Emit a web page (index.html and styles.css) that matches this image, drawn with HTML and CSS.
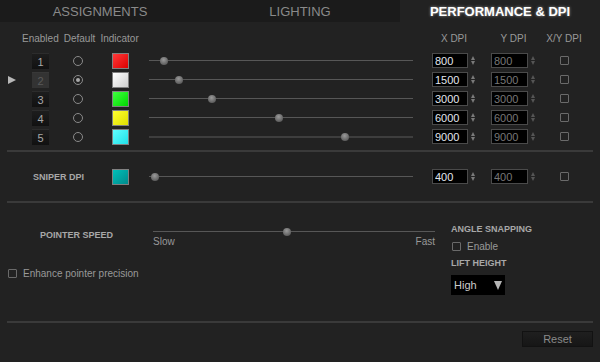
FILE: index.html
```html
<!DOCTYPE html>
<html>
<head>
    <meta charset="UTF-8">
    <meta name="viewport" content="width=device-width, initial-scale=1.0">
    <link rel="stylesheet" href="styles.css">
</head>
<body>
    <div class="tabs">
        <div class="tab">ASSIGNMENTS</div>
        <div class="tab">LIGHTING</div>
        <div class="tab active">PERFORMANCE &amp; DPI</div>
    </div>

    <div class="stages">
        <div class="stage-head">
            <div class="head-left">
                <span>Enabled</span>
                <span>Default</span>
                <span>Indicator</span>
            </div>
            <div class="col-x head">X DPI</div>
            <div class="col-y head">Y DPI</div>
            <div class="col-xy">X/Y DPI</div>
        </div>

        <div class="stage">
            <div class="pointer"></div>
            <div class="num">1</div>
            <span class="radio"></span>
            <span class="swatch red"></span>
            <div class="slider"><span class="thumb" style="left: 5.6%"></span></div>
            <div class="col-x"><input class="dpi" type="text" value="800"><span class="spin"></span></div>
            <div class="col-y"><input class="dpi off" type="text" value="800"><span class="spin dim"></span></div>
            <div class="col-xy"><span class="check"></span></div>
        </div>
        <div class="stage">
            <div class="pointer"><i class="arrow"></i></div>
            <div class="num sel">2</div>
            <span class="radio on"></span>
            <span class="swatch white"></span>
            <div class="slider"><span class="thumb" style="left: 11.5%"></span></div>
            <div class="col-x"><input class="dpi" type="text" value="1500"><span class="spin"></span></div>
            <div class="col-y"><input class="dpi off" type="text" value="1500"><span class="spin dim"></span></div>
            <div class="col-xy"><span class="check"></span></div>
        </div>
        <div class="stage">
            <div class="pointer"></div>
            <div class="num">3</div>
            <span class="radio"></span>
            <span class="swatch green"></span>
            <div class="slider"><span class="thumb" style="left: 24%"></span></div>
            <div class="col-x"><input class="dpi" type="text" value="3000"><span class="spin"></span></div>
            <div class="col-y"><input class="dpi off" type="text" value="3000"><span class="spin dim"></span></div>
            <div class="col-xy"><span class="check"></span></div>
        </div>
        <div class="stage">
            <div class="pointer"></div>
            <div class="num">4</div>
            <span class="radio"></span>
            <span class="swatch yellow"></span>
            <div class="slider"><span class="thumb" style="left: 49.4%"></span></div>
            <div class="col-x"><input class="dpi" type="text" value="6000"><span class="spin"></span></div>
            <div class="col-y"><input class="dpi off" type="text" value="6000"><span class="spin dim"></span></div>
            <div class="col-xy"><span class="check"></span></div>
        </div>
        <div class="stage">
            <div class="pointer"></div>
            <div class="num">5</div>
            <span class="radio"></span>
            <span class="swatch cyan"></span>
            <div class="slider thick"><span class="thumb" style="left: 74.4%"></span></div>
            <div class="col-x"><input class="dpi" type="text" value="9000"><span class="spin"></span></div>
            <div class="col-y"><input class="dpi off" type="text" value="9000"><span class="spin dim"></span></div>
            <div class="col-xy"><span class="check"></span></div>
        </div>
    </div>

    <div class="divider"></div>

    <div class="sniper">
        <div class="sniper-label">SNIPER DPI</div>
        <span class="swatch teal"></span>
        <div class="slider"><span class="thumb" style="left: 2.4%"></span></div>
        <div class="col-x"><input class="dpi" type="text" value="400"><span class="spin"></span></div>
        <div class="col-y"><input class="dpi off" type="text" value="400"><span class="spin dim"></span></div>
        <div class="col-xy"><span class="check"></span></div>
    </div>

    <div class="divider"></div>

    <div class="lower">
        <div class="lower-left">
            <div class="speed">
                <div class="speed-label">POINTER SPEED</div>
                <div class="speed-slider">
                    <div class="slider"><span class="thumb" style="left: 47.5%"></span></div>
                    <div class="speed-scale">
                        <span>Slow</span>
                        <span>Fast</span>
                    </div>
                </div>
            </div>
            <div class="option enhance">
                <span class="check"></span>
                <span>Enhance pointer precision</span>
            </div>
        </div>

        <div class="lower-right">
            <div class="group-title">ANGLE SNAPPING</div>
            <div class="option enable">
                <span class="check"></span>
                <span>Enable</span>
            </div>
            <div class="group-title lift">LIFT HEIGHT</div>
            <div class="select">High</div>
        </div>
    </div>

    <div class="divider"></div>

    <div class="footer">
        <button class="reset">Reset</button>
    </div>
</body>
</html>
```

FILE: styles.css
```css
* {
    margin: 0;
    padding: 0;
    box-sizing: border-box;
    font-family: 'Liberation Sans', Arial, sans-serif;
}

body {
    width: 600px;
    height: 362px;
    overflow: hidden;
    background: #222;
    color: #999;
    font-size: 10px;
}

/* tabs */
.tabs {
    display: flex;
    height: 22px;
    background: #1b1b1b;
}

.tab {
    flex: 1;
    display: flex;
    align-items: center;
    justify-content: center;
    font-size: 13px;
    color: #8a8a8a;
}

.tab.active {
    background: #222;
    color: #fff;
    font-weight: bold;
    text-shadow: 0 0 3px rgba(255, 255, 255, 0.55);
}

/* dpi stages */
.stages {
    padding-top: 10px;
    padding-bottom: 4px;
}

.stage-head {
    display: flex;
    height: 14px;
    line-height: 14px;
    margin-bottom: 5px;
}

.head-left {
    width: 432px;
    display: flex;
    gap: 5px;
    padding-left: 22px;
}

.col-x,
.col-y {
    display: flex;
    align-items: center;
}

.col-x {
    width: 44px;
    margin-right: 15px;
}

.col-y {
    width: 45px;
}

.col-x.head,
.col-y.head {
    justify-content: center;
}

.col-xy {
    width: 56px;
    display: flex;
    justify-content: center;
    align-items: center;
}

.stage {
    display: flex;
    align-items: center;
    height: 19px;
}

.pointer {
    width: 32px;
    padding-left: 8px;
}

.arrow {
    display: block;
    width: 0;
    height: 0;
    border-left: 8px solid #b8b8b8;
    border-top: 4px solid transparent;
    border-bottom: 4px solid transparent;
}

.num {
    width: 17px;
    height: 16px;
    margin-right: 24px;
    line-height: 16px;
    text-align: center;
    font-size: 11px;
    color: #a8a8a8;
    background: linear-gradient(#1d1d1d, #111);
    border-top: 1px solid #2c2c2c;
}

.num.sel {
    background: #333;
    border-top-color: #383838;
    color: #5a5a5a;
}

.radio {
    width: 10px;
    height: 10px;
    margin-right: 29px;
    border: 1.5px solid #8a8a8a;
    border-radius: 50%;
    display: flex;
    align-items: center;
    justify-content: center;
}

.radio.on::after {
    content: '';
    width: 4px;
    height: 4px;
    border-radius: 50%;
    background: #aaa;
}

.swatch {
    width: 17px;
    height: 16px;
    margin-right: 20px;
    border: 1px solid #808080;
}

.swatch.red { background: linear-gradient(135deg, #ff3a3a, #dd0000); }
.swatch.white { background: linear-gradient(135deg, #ffffff, #cfcfcf); }
.swatch.green { background: linear-gradient(135deg, #40ff40, #00d800); }
.swatch.yellow { background: linear-gradient(135deg, #ffff30, #dede00); }
.swatch.cyan { background: linear-gradient(135deg, #60ffff, #20e0e8); }
.swatch.teal { background: linear-gradient(135deg, #00c0b8, #008a8c); }

.slider {
    position: relative;
    width: 264px;
    height: 8px;
    margin-right: 19px;
    background: linear-gradient(#575757, #575757) left 3px / 100% 1px no-repeat;
}

.slider.thick {
    background: linear-gradient(#3e3e3e, #3e3e3e) left 3px / 100% 2px no-repeat;
}

.thumb {
    position: absolute;
    top: 0;
    width: 8px;
    height: 8px;
    border-radius: 50%;
    transform: translateX(-50%);
    background: radial-gradient(circle at 45% 35%, #9a9a9a, #5c5c5c 75%);
}

.dpi {
    width: 36px;
    height: 15px;
    padding-left: 2px;
    background: #000;
    border: 1px solid #4a4a4a;
    color: #e2e6ee;
    font-size: 11px;
    outline: none;
}

.col-y .dpi {
    width: 37px;
}

.dpi.off {
    color: #777;
}

.spin {
    width: 5px;
    height: 9px;
    margin-left: 3px;
    display: flex;
    flex-direction: column;
    justify-content: space-between;
}

.spin::before,
.spin::after {
    content: '';
    width: 0;
    height: 0;
    border-left: 2.5px solid transparent;
    border-right: 2.5px solid transparent;
}

.spin::before { border-bottom: 4px solid #7a7a7a; }
.spin::after { border-top: 4px solid #7a7a7a; }
.spin.dim::before { border-bottom-color: #555; }
.spin.dim::after { border-top-color: #555; }

.check {
    width: 9px;
    height: 9px;
    border: 1px solid #6a6a6a;
    border-radius: 1px;
}

.divider {
    height: 2px;
    margin: 0 7px;
    background: #3a3a3a;
}

/* sniper */
.sniper {
    display: flex;
    align-items: center;
    height: 49px;
}

.sniper-label {
    width: 112px;
    padding-left: 33px;
}

.sniper-label,
.speed-label,
.group-title {
    font-size: 9px;
    font-weight: bold;
    color: #a8a8a8;
}

/* pointer options */
.lower {
    display: flex;
    height: 118px;
}

.lower-left {
    width: 451px;
    padding-top: 25px;
}

.speed {
    display: flex;
    align-items: flex-start;
}

.speed-label {
    width: 153px;
    padding-left: 40px;
    line-height: 14px;
}

.speed-slider {
    width: 282px;
}

.speed-slider .slider {
    width: 100%;
    margin: 0;
}

.speed-scale {
    display: flex;
    justify-content: space-between;
    line-height: 11px;
}

.option {
    display: flex;
    align-items: center;
    gap: 6px;
    height: 12px;
}

.enhance {
    margin-top: 20px;
    padding-left: 8px;
}

.lower-right {
    padding-top: 20px;
}

.group-title {
    line-height: 12px;
}

.enable {
    margin-top: 5px;
    padding-left: 1px;
    gap: 6px;
}

.lift {
    margin-top: 5px;
}

.select {
    width: 54px;
    height: 20px;
    margin-top: 6px;
    padding: 0 3px;
    display: flex;
    align-items: center;
    justify-content: space-between;
    background: #000;
    color: #ccc;
    font-size: 11px;
}

.select::after {
    content: '';
    width: 0;
    height: 0;
    border-left: 4px solid transparent;
    border-right: 4px solid transparent;
    border-top: 9px solid #b5b5b5;
}

/* footer */
.footer {
    display: flex;
    justify-content: flex-end;
    padding: 8px 7px 0;
}

.reset {
    width: 71px;
    height: 16px;
    background: linear-gradient(#1f1f1f, #161616);
    border: 1px solid #121212;
    color: #8a8a8a;
    font-size: 11px;
}
```
